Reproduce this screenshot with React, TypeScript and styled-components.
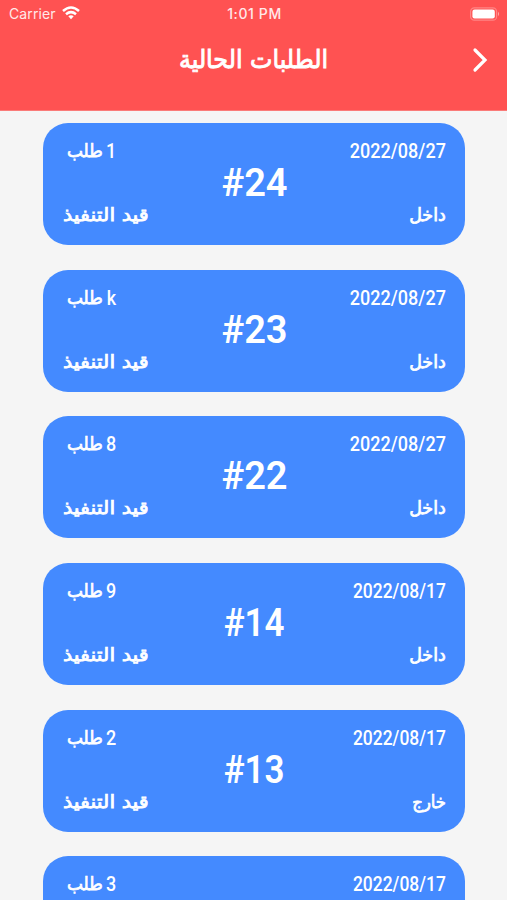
import React from "react";
import styled, { createGlobalStyle } from "styled-components";

const GlobalStyle = createGlobalStyle`
  * { box-sizing: border-box; }
  html, body { margin: 0; background: #f5f5f5; }
  body { height: 900px; overflow: hidden; color: #fff; font-family: Roboto, "DejaVu Sans", sans-serif; }
`;

const Screen = styled.div`
  width: 507px;
  height: 900px;
  overflow: hidden;
  background: #f5f5f5;
`;

const Header = styled.header`
  height: 111px;
  background: #ff5252;
  border-bottom: 1px solid #fa7b79;
`;

const StatusBar = styled.div`
  height: 28px;
  padding: 0 7px 0 9px;
  display: grid;
  grid-template-columns: 1fr auto 1fr;
  align-items: center;
  font-family: Inter, sans-serif;
  line-height: 28px;
  color: #ffe9e9;
`;

const Carrier = styled.div`
  display: flex;
  align-items: center;
  gap: 6px;
  font-size: 14px;
  letter-spacing: 0.1px;
  svg { margin-top: -2px; }
`;

const Clock = styled.div`
  font-weight: 500;
  font-size: 14px;
  letter-spacing: 0.6px;
`;

const Battery = styled.svg`
  justify-self: end;
  margin-top: -1px;
`;

const TitleBar = styled.div`
  height: 64px;
  display: grid;
  grid-template-columns: 53px 1fr 53px;
  align-items: center;
`;

const Title = styled.h1`
  grid-column: 2;
  margin: 0;
  text-align: center;
  font: 400 25px/36px "DejaVu Sans", sans-serif;
  -webkit-text-stroke: 0.9px #fff;
  white-space: nowrap;
  transform: scaleX(0.95);
`;

const Back = styled.button`
  padding: 0;
  border: 0;
  background: none;
  height: 28px;
  display: flex;
  justify-content: center;
`;

const List = styled.main`
  padding: 12px 42px 0 43px;
  display: flex;
  flex-direction: column;
  gap: 24.67px;
`;

const Card = styled.article`
  height: 122px;
  flex: none;
  padding: 16px 19px 18px 20px;
  border-radius: 25px;
  background: #448aff;
  display: grid;
  grid-template-columns: 1fr auto 1fr;
`;

const Side = styled.div<{ $end?: boolean }>`
  display: flex;
  flex-direction: column;
  justify-content: space-between;
  align-items: ${(p) => (p.$end ? "flex-end" : "flex-start")};
`;

const Digits = styled.span<{ $scale?: number }>`
  font: 500 19.5px/24px Roboto, sans-serif;
  margin-top: 1px;
  transform: scaleX(${(p) => p.$scale ?? 0.92});
  transform-origin: right;
`;

const Arabic = styled.span<{ $end?: boolean; $scale?: number }>`
  font: 400 18px/24px "DejaVu Sans", sans-serif;
  -webkit-text-stroke: 0.75px #fff;
  white-space: nowrap;
  transform: scaleX(${(p) => p.$scale ?? 1});
  transform-origin: ${(p) => (p.$end ? "right" : "left")};
`;

const Count = styled.div`
  width: 49px;
  display: flex;
  justify-content: space-between;
  margin-left: 4px;
`;

const OrderNumber = styled.strong<{ $scale: number }>`
  align-self: start;
  margin-top: 21px;
  font: 600 38px/46px Roboto, sans-serif;
  transform: scaleX(${(p) => p.$scale});
`;

type Order = { id?: number; date: string; count: string; place?: string };

const orders: Order[] = [
  { id: 24, date: "2022/08/27", count: "1", place: "داخل" },
  { id: 23, date: "2022/08/27", count: "k", place: "داخل" },
  { id: 22, date: "2022/08/27", count: "8", place: "داخل" },
  { id: 14, date: "2022/08/17", count: "9", place: "داخل" },
  { id: 13, date: "2022/08/17", count: "2", place: "خارج" },
  { date: "2022/08/17", count: "3" },
];

export default function App() {
  return (
    <Screen>
      <GlobalStyle />
      <Header>
        <StatusBar>
          <Carrier>
            Carrier
            <svg width="18" height="14" viewBox="0 0 18 14" fill="none" stroke="#fff" strokeWidth="2.5">
              <path d="M1 5Q9 -2 17 5M4 8.2Q9 4 14 8.2" />
              <path d="M6.3 10.3Q9 8.2 11.7 10.3L9 13.3Z" fill="#fff" stroke="none" />
            </svg>
          </Carrier>
          <Clock>1:01 PM</Clock>
          <Battery width="30" height="14" viewBox="0 0 30 14">
            <rect x="0.6" y="0.8" width="26" height="12.4" rx="3.8" fill="none" stroke="#ff8585" strokeWidth="1.2" />
            <rect x="2.4" y="2.6" width="22.4" height="8.8" rx="2.2" fill="#fff" />
            <path d="M28 4.8Q30 7 28 9.2Z" fill="#ffabab" />
          </Battery>
        </StatusBar>
        <TitleBar>
          <Title dir="rtl">الطلبات الحالية</Title>
          <Back aria-label="رجوع">
            <svg width="20" height="28" viewBox="0 0 20 28" fill="none" stroke="#fff" strokeWidth="3.2" strokeLinecap="round">
              <path d="M4 4L14 14L4 24" />
            </svg>
          </Back>
        </TitleBar>
      </Header>
      <List>
        {orders.map((o, i) => (
          <Card key={i}>
            <Side>
              <Count>
                <Arabic dir="rtl" $scale={0.94}>طلب</Arabic>
                <Digits>{o.count}</Digits>
              </Count>
              {o.id && <Arabic dir="rtl" $scale={1.15}>قيد التنفيذ</Arabic>}
            </Side>
            {o.id ? <OrderNumber $scale={o.id < 20 ? 0.92 : 1}>#{o.id}</OrderNumber> : <span />}
            <Side $end>
              <Digits $scale={o.date.endsWith("17") ? 0.895 : 0.925}>{o.date}</Digits>
              {o.place && (
                <Arabic dir="rtl" $end $scale={o.place === "خارج" ? 0.91 : 0.97}>{o.place}</Arabic>
              )}
            </Side>
          </Card>
        ))}
      </List>
    </Screen>
  );
}
